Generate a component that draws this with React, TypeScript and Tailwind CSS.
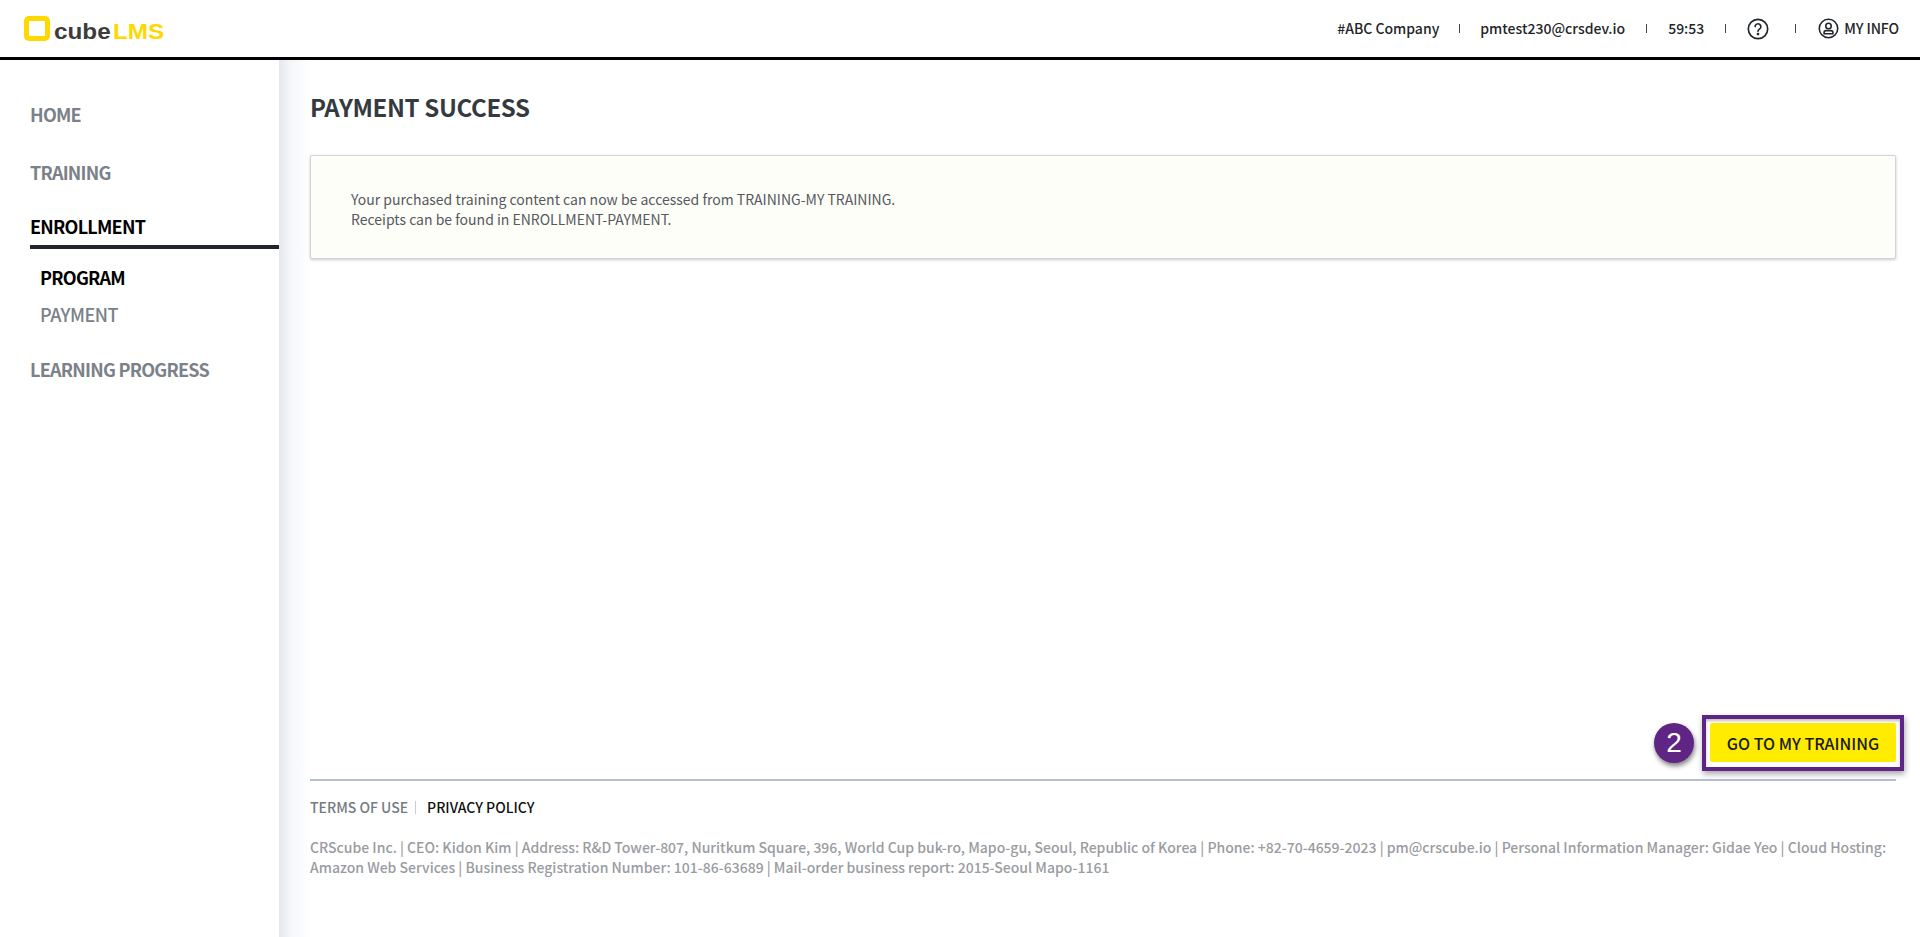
const font = { fontFamily: '"Noto Sans CJK KR", "Noto Sans", sans-serif' }

const Sep = () => <span className="block h-[9px] w-px bg-[#444]"></span>

const App = () => {
  return (
    <div style={font} className="flex h-[937px] flex-col overflow-hidden bg-white text-[#212529]">
      <header className="flex h-[60px] shrink-0 items-center justify-between border-b-[3px] border-black bg-white pl-6 pr-[21px]">
        <div className="flex items-end">
          <span className="mb-[1px] h-[25px] w-[26px] rounded-[5px] border-[5px] border-[#ffd800]"></span>
          <span className="ml-1 origin-left scale-x-[1.13] text-[21.5px] font-bold leading-[20px] text-[#3c3c3c]" style={{ fontFamily: '"Liberation Sans", sans-serif' }}>
            cube<span className="ml-[2px] text-[#ffd800]">LMS</span>
          </span>
        </div>
        <div className="flex items-center text-[14px] font-medium text-[#212529]">
          <span>#ABC Company</span>
          <span className="mx-[20px]"><Sep /></span>
          <span>pmtest230@crsdev.io</span>
          <span className="mx-[21px]"><Sep /></span>
          <span>59:53</span>
          <span className="mx-[21px]"><Sep /></span>
          <svg width="22" height="22" viewBox="0 0 20 20" fill="none" stroke="#212529" strokeWidth="1.5">
            <circle cx="10" cy="10" r="8.8" />
            <path d="M7.4 7.8a2.6 2.6 0 1 1 3.9 2.3c-.9.5-1.3 1-1.3 2" strokeLinecap="round" />
            <circle cx="10" cy="14.6" r="0.5" fill="#212529" />
          </svg>
          <span className="ml-[26px] mr-[22px]"><Sep /></span>
          <svg width="21" height="21" viewBox="0 0 20 20" fill="none" stroke="#212529" strokeWidth="1.5">
            <circle cx="10" cy="10" r="8.8" />
            <circle cx="10" cy="7.6" r="2.6" />
            <path d="M5.8 15v-1.2c0-1.1.8-1.8 1.9-1.8h4.6c1.1 0 1.9.7 1.9 1.8V15z" />
          </svg>
          <span className="ml-[5px] tracking-[-0.1px]">MY INFO</span>
        </div>
      </header>

      <div className="flex flex-1">
        <nav className="w-[279px] shrink-0 bg-white pt-[41px] text-[18px] font-bold tracking-[-0.75px] text-[#7a8188]">
          <div className="pl-[30px] leading-[27px]">HOME</div>
          <div className="mt-[31px] pl-[30px] leading-[27px]">TRAINING</div>
          <div className="mt-[27px] h-[27px] pl-[30px] leading-[27px] text-black">ENROLLMENT</div>
          <div className="ml-[30px] mt-[5px] h-[4px] bg-[#212529]"></div>
          <div className="mt-[15px] pl-[40px] leading-[27px] text-black">PROGRAM</div>
          <div className="mt-[10px] pl-[40px] font-medium leading-[27px] tracking-[-0.5px]">PAYMENT</div>
          <div className="mt-[28px] pl-[30px] leading-[27px]">LEARNING PROGRESS</div>
        </nav>

        <main className="flex min-w-0 flex-1 flex-col bg-[linear-gradient(to_right,#e4e7ef,#f6f7fa_12px,#ffffff_32px)] pl-[31px] pr-[24px]">
          <h1 className="mt-[29px] text-[24px] font-bold leading-[36px] tracking-[-0.35px] text-[#343a40]">PAYMENT SUCCESS</h1>
          <div className="mt-[30px] h-[104px] rounded-[2px] border border-[#d4d4d8] bg-[#fefef9] pl-[40px] pt-[33px] text-[14px] leading-[20px] text-[#55595e] shadow-[0_1px_3px_rgba(0,0,0,0.2)]">
            <p>Your purchased training content can now be accessed from TRAINING-MY TRAINING.</p>
            <p>Receipts can be found in ENROLLMENT-PAYMENT.</p>
          </div>

          <div className="flex-1"></div>

          <div className="flex items-center justify-end">
            <div className="relative">
              <span className="absolute left-[-48px] top-[8px] flex h-[40px] w-[40px] items-center justify-center rounded-full bg-[#5f2585] text-[28px] leading-none text-white shadow-[1px_3px_5px_rgba(0,0,0,0.5)]" style={{ fontFamily: '"Liberation Sans", sans-serif' }}>2</span>
              <div className="mr-[-8px] border-4 border-[#5f2585] bg-white p-[4px] pb-[5px] shadow-[1px_3px_6px_rgba(0,0,0,0.35),inset_0_2px_3px_rgba(0,0,0,0.25)]">
                <button className="flex h-[39px] w-[186px] items-center justify-center rounded-[2px] bg-[#ffec00] text-[16px] font-medium text-[#1a1a1a]">GO TO MY TRAINING</button>
              </div>
            </div>
          </div>

          <footer className="mt-[8px] h-[158px] border-t-2 border-[#b4bfcf] pt-[16px] font-medium">
            <div className="flex items-center text-[14px] leading-[20px]">
              <span className="text-[#757b82]">TERMS OF USE</span>
              <span className="mx-[7px] h-[13px] w-px bg-[#ccc]"></span>
              <span className="ml-[4px] text-[#111]">PRIVACY POLICY</span>
            </div>
            <p className="mt-[20px] text-[14px] leading-[20px] text-[#999ca1]">
              CRScube Inc. | CEO: Kidon Kim | Address: R&amp;D Tower-807, Nuritkum Square, 396, World Cup buk-ro, Mapo-gu, Seoul, Republic of Korea | Phone: +82-70-4659-2023 | pm@crscube.io | Personal Information Manager: Gidae Yeo | Cloud Hosting: Amazon Web Services | Business Registration Number: 101-86-63689 | Mail-order business report: 2015-Seoul Mapo-1161
            </p>
          </footer>
        </main>
      </div>
    </div>
  )
}

export default App
